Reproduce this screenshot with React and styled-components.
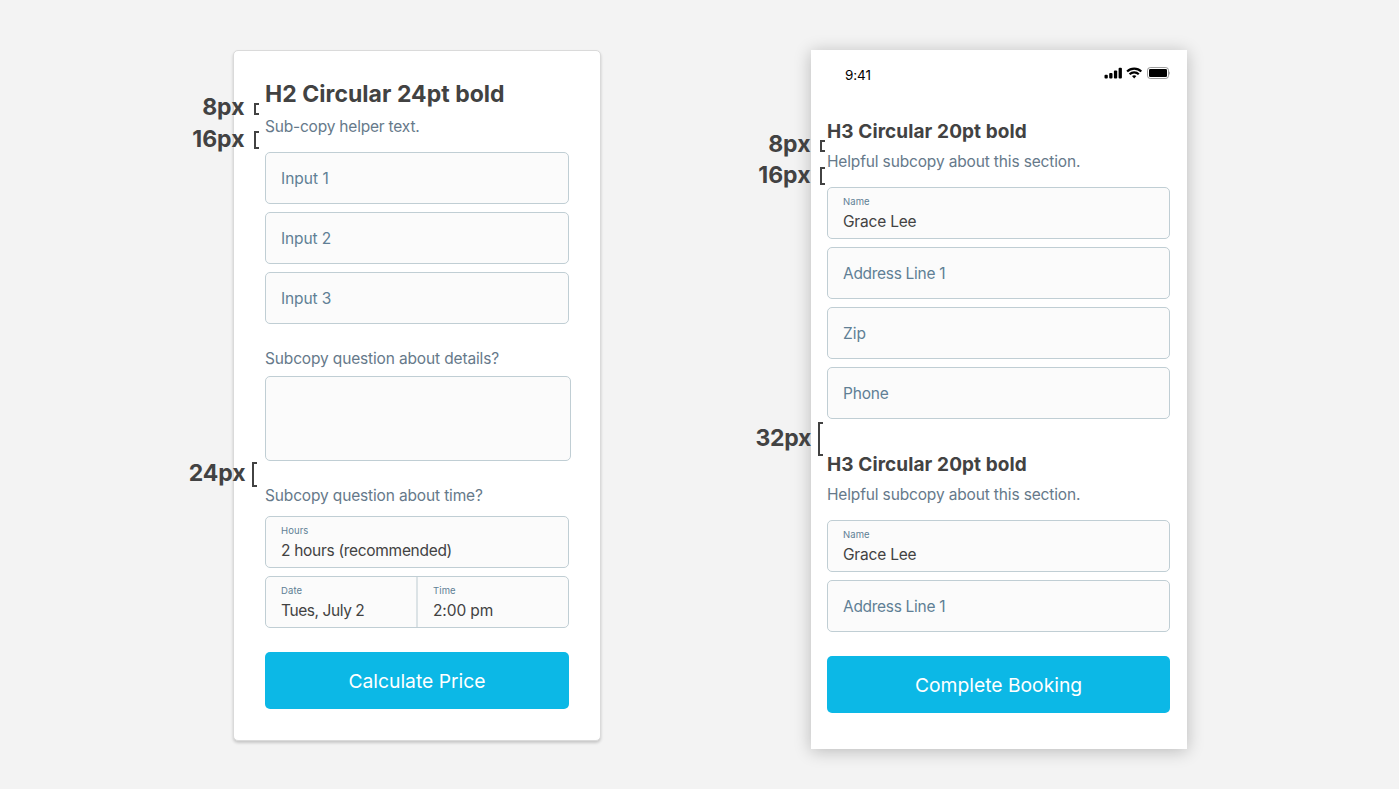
import React from 'react';
import styled, { createGlobalStyle } from 'styled-components';

const ink = '#424242';
const slate = '#66798a';
const steel = '#607f95';

const GlobalStyle = createGlobalStyle`
  * { box-sizing: border-box; }
  body {
    margin: 0;
    background: #f3f3f3;
    font-family: Inter, "Liberation Sans", sans-serif;
  }
`;

const Page = styled.main`
  display: flex;
  align-items: flex-start;
  gap: 210px;
  width: 1399px;
  height: 789px;
  padding: 50px 0 0 233px;
  overflow: hidden;
`;

const Card = styled.section`
  position: relative;
  width: 368px;
  height: 691px;
  padding: 28px 31px 0;
  border: 1px solid #dadada;
  border-radius: 5px;
  background: #fff;
  box-shadow: 0 2px 3px rgba(0, 0, 0, 0.18);
`;

const Phone = styled.section`
  position: relative;
  width: 376px;
  height: 699px;
  padding: 0 17px 0 16px;
  background: #fff;
  box-shadow: 0 2px 16px rgba(0, 0, 0, 0.24);
`;

const StatusBar = styled.header`
  display: flex;
  justify-content: space-between;
  align-items: flex-start;
  height: 68px;
  padding: 17px 0 0 18px;
  color: #000;
`;

const Clock = styled.span`
  font-size: 13.5px;
  line-height: 16px;
  letter-spacing: -0.1px;
`;

const StatusIcons = styled.svg`
  display: block;
`;

const Title = styled.h2`
  margin: 0;
  color: ${ink};
  font-size: 23px;
  font-weight: 650;
  line-height: 30px;
  letter-spacing: 0.04px;
`;

const SectionTitle = styled.h3`
  margin: ${(p) => p.$above || 0}px 0 0;
  color: ${ink};
  font-size: 19px;
  font-weight: 650;
  line-height: 28px;
  letter-spacing: 0.1px;
`;

const Copy = styled.p`
  margin: ${(p) => p.$margin};
  color: ${slate};
  font-size: 15.5px;
  line-height: 20px;
  letter-spacing: ${(p) => p.$tracking || -0.15}px;
  white-space: nowrap;
`;

const Fields = styled.div`
  display: flex;
  flex-direction: column;
  gap: 8px;
`;

const Field = styled.div`
  display: flex;
  flex-direction: column;
  justify-content: center;
  flex: 1;
  min-height: 52px;
  padding: 2px 15px 0;
  border: 1px solid #c0ced4;
  border-radius: 5px;
  background: #fbfbfb;
`;

const SplitField = styled.div`
  display: flex;
  height: 52px;
  border: 1px solid #c0ced4;
  border-radius: 5px;
  background: #fbfbfb;
`;

const Half = styled.div`
  display: flex;
  flex-direction: column;
  justify-content: center;
  width: 150px;
  padding: 2px 0 0 15px;

  & + & {
    border-left: 2px solid #dce3e6;
  }
`;

const TextArea = styled.div`
  width: 306px;
  height: 85px;
  border: 1px solid #c0ced4;
  border-radius: 5px;
  background: #fbfbfb;
`;

const Placeholder = styled.span`
  color: ${steel};
  font-size: 15.5px;
  line-height: 20px;
  letter-spacing: ${(p) => p.$tracking || 0}px;
`;

const Label = styled.span`
  color: ${steel};
  font-size: 9.5px;
  line-height: 12px;
  letter-spacing: 0.1px;
`;

const Value = styled.span`
  margin-top: 4px;
  color: ${ink};
  font-size: 15.5px;
  line-height: 20px;
  letter-spacing: ${(p) => p.$tracking || 0}px;
`;

const Button = styled.button`
  display: block;
  width: 100%;
  height: 57px;
  margin: 24px 0 0;
  padding: 1px 0 0;
  border: 0;
  border-radius: 5px;
  background: #0cb8e6;
  color: #fff;
  font-family: inherit;
  font-size: 19.3px;
`;

/* Spacing callouts sit over the edge of each card. */
const Callout = styled.div`
  position: absolute;
  top: ${(p) => p.$top}px;
  left: ${(p) => p.$left}px;
  display: flex;
  justify-content: flex-end;
  align-items: flex-start;
  gap: ${(p) => p.$gap}px;
  width: 70px;
`;

const Amount = styled.span`
  color: ${ink};
  font-size: 23px;
  font-weight: 700;
  line-height: 28px;
  letter-spacing: ${(p) => p.$tracking || 0}px;
`;

const Bracket = styled.i`
  flex: none;
  width: 5px;
  height: ${(p) => p.$height}px;
  margin-top: ${(p) => p.$drop}px;
  border: 2px solid ${ink};
  border-right: 0;
`;

function Spacing({ amount, top, left, gap, height, drop, tracking }) {
  return (
    <Callout $top={top} $left={left} $gap={gap}>
      <Amount $tracking={tracking}>{amount}</Amount>
      <Bracket $height={height} $drop={drop} />
    </Callout>
  );
}

function Empty({ text, tracking }) {
  return (
    <Field>
      <Placeholder $tracking={tracking}>{text}</Placeholder>
    </Field>
  );
}

function Filled({ label, value, tracking }) {
  return (
    <Field>
      <Label>{label}</Label>
      <Value $tracking={tracking}>{value}</Value>
    </Field>
  );
}

function Status() {
  return (
    <StatusIcons width="66" height="12" viewBox="0 0 66 12">
      <rect x="0.5" y="7.7" width="3.3" height="3.8" rx="1" />
      <rect x="5.2" y="5.9" width="3.3" height="5.6" rx="1" />
      <rect x="9.9" y="3.5" width="3.3" height="8" rx="1" />
      <rect x="14.6" y="0.8" width="3.3" height="10.7" rx="1" />
      <g fill="none" stroke="#000" strokeWidth="2.2">
        <path d="M23.1 4.5a10.2 10.2 0 0 1 14.2 0" />
        <path d="M25.6 7.2a6.6 6.6 0 0 1 9.2 0" />
      </g>
      <path d="M30.2 11.4l-2.2-2.3a3.4 3.4 0 0 1 4.4 0z" />
      <rect x="43.5" y="0.5" width="21" height="11" rx="2.8" fill="none" stroke="#000" strokeOpacity="0.38" />
      <rect x="45" y="2" width="18" height="8" rx="1.3" />
      <path d="M65.3 4.4v3.4a2 2 0 0 0 0-3.4z" fillOpacity="0.4" />
    </StatusIcons>
  );
}

export default function App() {
  return (
    <>
      <GlobalStyle />
      <Page>
        <Card>
          <Title>H2 Circular 24pt bold</Title>
          <Copy $margin="8px 0 15px" $tracking={-0.2}>Sub-copy helper text.</Copy>
          <Fields>
            <Empty text="Input 1" />
            <Empty text="Input 2" tracking={-0.1} />
            <Empty text="Input 3" tracking={-0.1} />
          </Fields>
          <Copy $margin="25px 0 7px">Subcopy question about details?</Copy>
          <TextArea />
          <Copy $margin="25px 0 10px">Subcopy question about time?</Copy>
          <Fields>
            <Filled label="Hours" value="2 hours (recommended)" tracking={-0.3} />
            <SplitField>
              <Half>
                <Label>Date</Label>
                <Value $tracking={-0.42}>Tues, July 2</Value>
              </Half>
              <Half>
                <Label>Time</Label>
                <Value $tracking={-0.1}>2:00 pm</Value>
              </Half>
            </SplitField>
          </Fields>
          <Button>Calculate Price</Button>
          <Spacing amount="8px" top={42} left={-45} gap={9.5} height={12} drop={10} />
          <Spacing amount="16px" top={74} left={-45} gap={9.5} height={18} drop={6} />
          <Spacing amount="24px" top={408} left={-47} gap={6.5} height={25} drop={3} tracking={-0.1} />
        </Card>

        <Phone>
          <StatusBar>
            <Clock>9:41</Clock>
            <Status />
          </StatusBar>
          <SectionTitle>H3 Circular 20pt bold</SectionTitle>
          <Copy $margin="6px 0 15px">Helpful subcopy about this section.</Copy>
          <Fields>
            <Filled label="Name" value="Grace Lee" tracking={-0.2} />
            <Empty text="Address Line 1" tracking={-0.3} />
            <Empty text="Zip" />
            <Empty text="Phone" tracking={-0.2} />
          </Fields>
          <SectionTitle $above={32}>H3 Circular 20pt bold</SectionTitle>
          <Copy $margin="6px 0 15px">Helpful subcopy about this section.</Copy>
          <Fields>
            <Filled label="Name" value="Grace Lee" tracking={-0.2} />
            <Empty text="Address Line 1" tracking={-0.3} />
          </Fields>
          <Button>Complete Booking</Button>
          <Spacing amount="8px" top={80} left={-56} gap={9.5} height={12} drop={10} />
          <Spacing amount="16px" top={111} left={-56} gap={9.5} height={18} drop={6} />
          <Spacing amount="32px" top={374} left={-58} gap={7} height={34} drop={-2} tracking={-0.3} />
        </Phone>
      </Page>
    </>
  );
}
